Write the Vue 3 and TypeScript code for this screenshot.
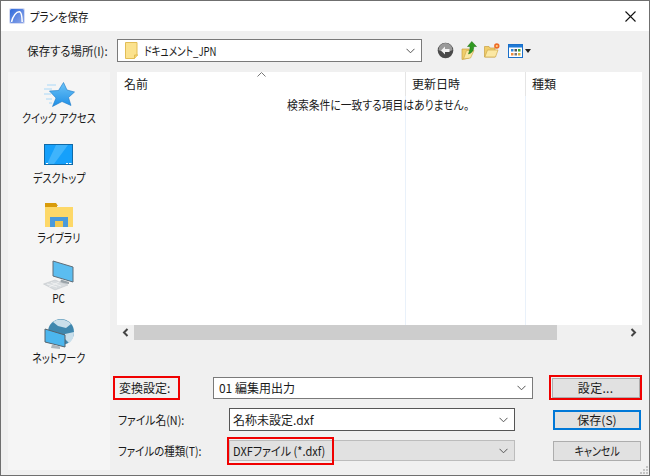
<script setup lang="ts">
const places = [
  { id: 'quick', label: 'クイック アクセス' },
  { id: 'desktop', label: 'デスクトップ' },
  { id: 'library', label: 'ライブラリ' },
  { id: 'pc', label: 'PC' },
  { id: 'network', label: 'ネットワーク' },
]
</script>

<template>
  <div class="dialog">
    <header class="titlebar">
      <svg class="app-icon" width="16" height="16" viewBox="0 0 16 16">
        <defs>
          <linearGradient id="appbg" x1="0" y1="0" x2="1" y2="1">
            <stop offset="0" stop-color="#2f6bdc" />
            <stop offset="1" stop-color="#8fa6e8" />
          </linearGradient>
        </defs>
        <rect width="16" height="16" rx="2" fill="#d5dcf3" />
        <rect x="1" y="1" width="14" height="14" rx="1.500" fill="url(#appbg)" />
        <path d="M2.500 14 C4 7.500 7.500 3.500 10.500 3.800 C12.500 4 13 8 13.200 14" stroke="#fff" stroke-width="1.500" fill="none" />
      </svg>
      <span class="title">プランを保存</span>
      <svg class="close" width="11" height="11" viewBox="0 0 11 11">
        <path d="M0.500 0.500 L10.500 10.500 M10.500 0.500 L0.500 10.500" stroke="#111" stroke-width="1.100" fill="none" />
      </svg>
    </header>

    <div class="toolbar">
      <span class="location-label"><span class="fit fit-right">保存する場所(I):</span></span>
      <div class="combo location">
        <svg class="folder-small" width="14" height="17" viewBox="0 0 14 17">
          <path d="M0.500 0.500 H12 V13.500 L9.500 16.500 H0.500 Z" fill="#fbe28e" stroke="#e2bd55" />
          <path d="M9.500 16.500 V13 H13" fill="#f4d26e" stroke="#e2bd55" />
        </svg>
        <span class="combo-text"><span class="fit fit-doc">ドキュメント_JPN</span></span>
        <svg class="chevron" width="9" height="6" viewBox="0 0 9 6">
          <path d="M0.500 0.800 L4.500 4.800 L8.500 0.800" stroke="#555" fill="none" />
        </svg>
      </div>
      <div class="tools">
        <svg width="17" height="17" viewBox="0 0 17 17">
          <circle cx="8.500" cy="8.500" r="7.800" fill="#4a4a4a" />
          <path d="M1.500 8 A7 7 0 0 1 15.500 8 C12 10 5 10 1.500 8 Z" fill="#9a9a9a" />
          <path d="M8 4.500 L4 8.500 L8 12.500 V10 H12.500 V7 H8 Z" fill="#f2f2f2" />
        </svg>
        <svg width="16" height="19" viewBox="0 0 16 19">
          <path d="M1 8 H8 V17 L1 18.500 Z" fill="#f0cd6a" stroke="#c9a040" stroke-width="0.700" />
          <path d="M2.500 18 L5.500 9.500 H13 L9.500 17 Z" fill="#fbe8a4" stroke="#d0aa4a" stroke-width="0.700" />
          <path d="M7.500 13 C9 9 9 6.500 9 5.500 H6.500 L10.800 0.500 L15.500 5.500 H12.800 C12.800 9.500 11 12 7.500 13 Z" fill="#2f9a21" stroke="#1d6d14" stroke-width="0.500" />
        </svg>
        <svg width="16" height="15" viewBox="0 0 16 15">
          <path d="M0.500 14 V3.500 H5 L6 5 H11 V14 Z" fill="#f0cd6a" stroke="#c9a040" stroke-width="0.700" />
          <path d="M0.800 14 L3.500 7 H14 L11.500 14 Z" fill="#fbe8a4" stroke="#d0aa4a" stroke-width="0.700" />
          <circle cx="12.800" cy="3" r="2.700" fill="#ee6a25" />
          <circle cx="12.800" cy="3" r="1.100" fill="#fdd68a" />
        </svg>
        <div class="views">
          <svg width="15" height="14" viewBox="0 0 15 14">
            <rect x="0.500" y="0.500" width="14" height="13" fill="#fff" stroke="#1a6fc9" />
            <rect x="1" y="1" width="13" height="2.500" fill="#1f7ad6" />
            <rect x="3" y="5" width="2.500" height="2.500" fill="#2f86dc" />
            <rect x="6.500" y="5" width="2.500" height="2.500" fill="#555" />
            <rect x="10" y="5" width="2.500" height="2.500" fill="#3aa535" />
            <rect x="3" y="9" width="2.500" height="2.500" fill="#ee8a3c" />
            <rect x="6.500" y="9" width="2.500" height="2.500" fill="#777" />
            <rect x="10" y="9" width="2.500" height="2.500" fill="#d9b23c" />
          </svg>
          <span class="views-caret"></span>
        </div>
      </div>
    </div>

    <div class="body">
      <nav class="sidebar">
        <div v-for="place in places" :key="place.id" class="place">
          <svg v-if="place.id === 'quick'" width="32" height="32" viewBox="0 0 32 32">
            <defs>
              <linearGradient id="star" x1="0" y1="0" x2="0" y2="1">
                <stop offset="0" stop-color="#6cc3f7" />
                <stop offset="1" stop-color="#1f8fe6" />
              </linearGradient>
            </defs>
            <path d="M4 6 H13 M1 10 H9 M1 15 H8 M3 20 H9 M6 24 H9" stroke="#a9d8f8" stroke-width="1" fill="none" />
            <path d="M20.500 3.500 L24 11 L31.500 13 L25.500 18.500 L28 26.500 L19 22.500 L9.500 27.500 L13 19 L6.500 12 L15.500 11.500 Z" fill="url(#star)" stroke="#1a78c8" stroke-width="0.600" />
          </svg>
          <svg v-else-if="place.id === 'desktop'" width="30" height="32" viewBox="0 0 30 32">
            <rect x="0.500" y="5.500" width="28" height="20" fill="#15a0fb" stroke="#0f6aa8" />
            <path d="M12 6 H24 L10 25 H3 Z" fill="#3fb4fc" />
            <path d="M2 24.500 H4 M25 24.500 H27.500 M22 24.500 H24" stroke="#fff" fill="none" />
          </svg>
          <svg v-else-if="place.id === 'library'" width="30" height="32" viewBox="0 0 30 32">
            <path d="M1 4 H12 L14 7 H13 V10 H1 Z" fill="#d99b0a" />
            <path d="M1 8 H29 V28 H1 Z" fill="#fdd868" />
            <path d="M6 28 V18 H24 V28 H19 V22 H11 V28 Z" fill="#4a9adb" />
            <rect x="11" y="22" width="8" height="6" fill="#f1c84f" />
          </svg>
          <svg v-else-if="place.id === 'pc'" width="32" height="32" viewBox="0 0 32 32">
            <path d="M10 2 L30 8 V23 L10 17 Z" fill="#5bbdf0" stroke="#5f6d78" stroke-width="1" />
            <path d="M18 20.500 L26 23 V25 L17 24 Z" fill="#9aa3a9" />
            <path d="M0.500 25 L12 21 L25 26 L12 31 Z" fill="#d8dcdf" stroke="#bcc1c5" stroke-width="0.500" />
            <path d="M4 25 L14 28 M8 23.500 L18 27 M6 28 L16 23" stroke="#f6f6f6" stroke-width="0.700" fill="none" />
          </svg>
          <svg v-else width="32" height="32" viewBox="0 0 32 32">
            <circle cx="18" cy="13" r="13" fill="#3f87ae" />
            <path d="M10 3 C15 -1 24 0 28 5 L23 9 L15 7 Z M22 15 L31 13 C31 18 29 22 26 24 L22 20 Z" fill="#c9dfeb" />
            <path d="M2 10 L22 16 V28 L2 23 Z" fill="#4cb6ee" stroke="#56636c" stroke-width="1" />
            <path d="M9 25.500 L17 27.500 V30 L8 29 Z" fill="#aeb6bc" />
          </svg>
          <span class="place-label"><span class="fit fit-place">{{ place.label }}</span></span>
        </div>
      </nav>

      <main class="content">
        <section class="listing">
          <div class="list-area">
            <div class="col col-name">
              <div class="col-head">
                名前
                <svg class="sort" width="9" height="5" viewBox="0 0 9 5">
                  <path d="M0.500 4.500 L4.500 0.500 L8.500 4.500" stroke="#777" fill="none" />
                </svg>
              </div>
            </div>
            <div class="col col-date"><div class="col-head">更新日時</div></div>
            <div class="col col-type"><div class="col-head">種類</div></div>
            <p class="empty"><span class="fit fit-empty">検索条件に一致する項目はありません。</span></p>
          </div>
          <div class="hscroll">
            <svg class="arrow" width="17" height="15" viewBox="0 0 17 15">
              <path d="M10.500 4 L7 7.500 L10.500 11" stroke="#444" stroke-width="2" fill="none" />
            </svg>
            <div class="thumb"></div>
            <div class="track"></div>
            <svg class="arrow" width="17" height="15" viewBox="0 0 17 15">
              <path d="M6.500 4 L10 7.500 L6.500 11" stroke="#444" stroke-width="2" fill="none" />
            </svg>
          </div>
        </section>

        <section class="form">
          <div class="row row-convert">
            <span class="label marked convert-label">変換設定:</span>
            <div class="combo convert">
              <span class="combo-text">01 編集用出力</span>
              <svg class="chevron" width="9" height="6" viewBox="0 0 9 6">
                <path d="M0.500 0.800 L4.500 4.800 L8.500 0.800" stroke="#555" fill="none" />
              </svg>
            </div>
            <div class="marked btn-mark">
              <button class="btn"><span class="dots">設定...</span></button>
            </div>
          </div>
          <div class="row row-name">
            <span class="label field-label"><span class="fit fit-name">ファイル名(N):</span></span>
            <div class="combo field dark">
              <span class="combo-text">名称未設定.dxf</span>
              <svg class="chevron" width="9" height="6" viewBox="0 0 9 6">
                <path d="M0.500 0.800 L4.500 4.800 L8.500 0.800" stroke="#555" fill="none" />
              </svg>
            </div>
            <button class="btn side primary">保存(S)</button>
          </div>
          <div class="row row-type">
            <span class="label field-label"><span class="fit fit-kind">ファイルの種類(T):</span></span>
            <div class="combo field disabled">
              <span class="combo-text"><span class="fit fit-dxf">DXFファイル (*.dxf)</span></span>
              <span class="marked type-mark"></span>
              <svg class="chevron" width="9" height="6" viewBox="0 0 9 6">
                <path d="M0.500 0.800 L4.500 4.800 L8.500 0.800" stroke="#555" fill="none" />
              </svg>
            </div>
            <button class="btn side"><span class="fit fit-cancel">キャンセル</span></button>
          </div>
        </section>
      </main>
    </div>
    <svg class="grip" width="10" height="10" viewBox="0 0 10 10">
      <path d="M7 1h2v2H7z M7 4h2v2H7z M4 4h2v2H4z M7 7h2v2H7z M4 7h2v2H4z M1 7h2v2H1z" fill="#c4c4c4" />
    </svg>
  </div>
</template>

<style>
html,
body {
  margin: 0;
  background: #f0f0f0;
}
</style>

<style scoped>
.dialog {
  position: relative;
  box-sizing: border-box;
  width: 650px;
  height: 476px;
  display: flex;
  flex-direction: column;
  background: #f0f0f0;
  border: 1px solid #6f6f6f;
  overflow: hidden;
  font-family: "Noto Sans CJK JP", "Liberation Sans", sans-serif;
  font-size: 12px;
  font-feature-settings: "palt";
  color: #1a1a1a;
}

/* kana runs narrower in the system UI font */
.fit {
  display: inline-block;
  white-space: nowrap;
  transform-origin: left center;
}

.fit-right {
  transform: scaleX(0.95);
  transform-origin: right center;
}

.fit-doc {
  transform: scaleX(0.8);
}

.fit-place {
  transform: scaleX(0.84);
  transform-origin: center;
}

.fit-empty {
  transform: scaleX(0.9);
  transform-origin: center;
}

.fit-name {
  transform: scaleX(0.9);
}

.fit-kind {
  transform: scaleX(0.87);
}

.fit-dxf {
  transform: scaleX(0.92);
}

.fit-cancel {
  transform: scaleX(0.83);
  transform-origin: center;
}

.titlebar {
  flex: 0 0 30px;
  display: flex;
  align-items: center;
  background: #fff;
  padding: 0 13px 0 8px;
}

.app-icon {
  margin-right: 5px;
}

.title {
  flex: 1;
  transform: scaleX(0.87);
  transform-origin: left center;
}

.toolbar {
  flex: 0 0 41px;
  display: flex;
  align-items: flex-start;
  padding-top: 8px;
  box-sizing: border-box;
}

.location-label {
  width: 107px;
  text-align: right;
  line-height: 23px;
  margin-right: 9px;
}

.combo {
  position: relative;
  box-sizing: border-box;
  display: flex;
  align-items: center;
  background: #fff;
  border: 1px solid #7a7a7a;
}

.combo-text {
  flex: 1;
  white-space: nowrap;
}

.chevron {
  margin-right: 6px;
}

.location {
  width: 305px;
  height: 23px;
  padding-left: 7px;
}

.folder-small {
  margin-right: 5px;
}

.tools {
  display: flex;
  align-items: center;
  height: 23px;
  margin-left: 15px;
  gap: 7px;
}

.views {
  display: flex;
  align-items: center;
  margin-left: 1px;
  gap: 2px;
}

.views-caret {
  border-left: 3.500px solid transparent;
  border-right: 3.500px solid transparent;
  border-top: 4px solid #222;
}

.body {
  flex: 1;
  display: flex;
  padding: 0 7px 5px 7px;
  min-height: 0;
}

.sidebar {
  width: 102px;
  margin-right: 7px;
  background: #f5f5f5;
  display: flex;
  flex-direction: column;
  padding-top: 7px;
  box-sizing: border-box;
}

.place {
  height: 60px;
  display: flex;
  flex-direction: column;
  align-items: center;
}

.place svg {
  flex: 0 0 32px;
}

.place-label {
  line-height: 15px;
  margin-top: -1px;
  white-space: nowrap;
}

.content {
  flex: 1;
  display: flex;
  flex-direction: column;
  min-width: 0;
}

.listing {
  height: 268px;
  display: flex;
  flex-direction: column;
}

.list-area {
  position: relative;
  flex: 1;
  display: flex;
  background: #fff;
}

.col {
  box-sizing: border-box;
  border-right: 1px solid #e9f1fa;
}

.col-name {
  width: 289px;
}

.col-date {
  width: 120px;
}

.col-type {
  flex: 1;
  border-right: 0;
}

.col-head {
  position: relative;
  height: 24px;
  line-height: 23px;
  padding-left: 6px;
  margin-right: -1px;
  border-right: 1px solid #e5e5e5;
}

.col-name .col-head {
  padding-left: 7px;
}

.col-type .col-head {
  border-right: 0;
  margin-right: 0;
}

.sort {
  position: absolute;
  left: 140px;
  top: 0;
}

.empty {
  position: absolute;
  top: 24px;
  left: 0;
  right: 2px;
  margin: 0;
  text-align: center;
  line-height: 18px;
}

.hscroll {
  flex: 0 0 15px;
  display: flex;
  background: #f0f0f0;
}

.thumb {
  width: 423px;
  background: #cdcdcd;
}

.track {
  flex: 1;
}

.form {
  display: flex;
  flex-direction: column;
}

.row {
  display: flex;
  align-items: center;
}

.row-convert {
  margin-top: 35px;
  height: 25px;
}

.row-name {
  margin-top: 8px;
  height: 23px;
}

.row-type {
  margin-top: 9px;
  height: 21px;
}

.label {
  white-space: nowrap;
}

.marked {
  box-sizing: border-box;
  border: 2px solid #f00000;
}

.convert-label {
  width: 67px;
  height: 24px;
  line-height: 19px;
  padding-left: 4px;
  margin-left: -4px;
  margin-right: 33px;
}

.convert {
  width: 321px;
  height: 22px;
  padding-left: 5px;
}

.btn-mark {
  display: flex;
  align-items: center;
  justify-content: center;
  box-sizing: border-box;
  width: 93px;
  height: 25px;
  margin-left: 16px;
}

.dots {
  letter-spacing: 0.300px;
}

.field-label {
  box-sizing: border-box;
  width: 112px;
  padding-left: 1px;
}

.field {
  width: 286px;
  height: 100%;
  padding-left: 3px;
}

.dark {
  border-color: #555;
}

.disabled {
  background: #e1e1e1;
  border-color: #bcbcbc;
}

.type-mark {
  position: absolute;
  left: -3px;
  top: -4px;
  width: 107px;
  height: 28px;
}

.btn {
  box-sizing: border-box;
  width: 88px;
  height: 20px;
  margin: 0;
  padding: 0;
  font: inherit;
  font-feature-settings: inherit;
  color: inherit;
  line-height: 1;
  background: #e1e1e1;
  border: 1px solid #adadad;
}

.side {
  margin-left: 38px;
}

.primary {
  border: 2px solid #0078d7;
}

.grip {
  position: absolute;
  right: 0;
  bottom: 0;
}
</style>
